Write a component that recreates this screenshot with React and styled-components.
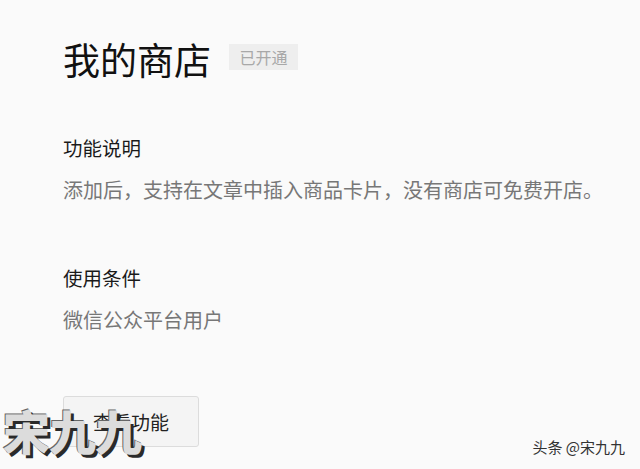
import React from 'react'
import styled, { createGlobalStyle } from 'styled-components'

const GlobalStyle = createGlobalStyle`
  html, body {
    margin: 0;
    padding: 0;
    background: #fafafa;
    font-family: "Noto Sans CJK SC", "Noto Sans", sans-serif;
  }
`

const Page = styled.div`
  position: relative;
  width: 640px;
  height: 469px;
  overflow: hidden;
  box-sizing: border-box;
  padding: 36px 0 0 63px;
  display: flex;
  flex-direction: column;
`

const Header = styled.div`
  display: flex;
  align-items: center;
  gap: 18px;
`

const Title = styled.h1`
  margin: 0;
  font-size: 37px;
  line-height: 46px;
  font-weight: 400;
  color: #111;
`

const Badge = styled.span`
  display: inline-flex;
  align-items: center;
  justify-content: center;
  width: 69px;
  height: 26px;
  background: #eeeeee;
  color: #a8a8a8;
  font-size: 16px;
  margin-top: -4px;
`

const Section = styled.div`
  display: flex;
  flex-direction: column;
  gap: 14px;
  margin-top: ${p => p.top}px;
`

const Label = styled.div`
  font-size: 19.5px;
  line-height: 28px;
  color: #1a1a1a;
`

const Desc = styled.div`
  font-size: 20px;
  line-height: 28px;
  color: #777;
`

const Button = styled.button`
  margin-top: 62px;
  width: 136px;
  height: 51px;
  border: 1px solid #dcdcdc;
  border-radius: 3px;
  background: #f4f4f4;
  color: #222;
  font-family: inherit;
  font-size: 19px;
  padding: 0;
`

const Watermark = styled.div`
  position: absolute;
  left: 3px;
  top: 400px;
  font-size: 47px;
  font-weight: 900;
  line-height: 60px;
  color: #dcdcdc;
  letter-spacing: -1px;
  text-shadow: 3px 3px 0 #2a2a2a, -1px -1px 0 #666;
`

const Credit = styled.div`
  position: absolute;
  right: 15px;
  bottom: 12px;
  font-size: 15px;
  color: #333;
`

export default function App() {
  return (
    <>
      <GlobalStyle />
      <Page>
        <Header>
          <Title>我的商店</Title>
          <Badge>已开通</Badge>
        </Header>
        <Section top={52}>
          <Label>功能说明</Label>
          <Desc>添加后，支持在文章中插入商品卡片，没有商店可免费开店。</Desc>
        </Section>
        <Section top={60}>
          <Label>使用条件</Label>
          <Desc>微信公众平台用户</Desc>
        </Section>
        <Button>查看功能</Button>
        <Watermark>宋九九</Watermark>
        <Credit>头条 @宋九九</Credit>
      </Page>
    </>
  )
}
